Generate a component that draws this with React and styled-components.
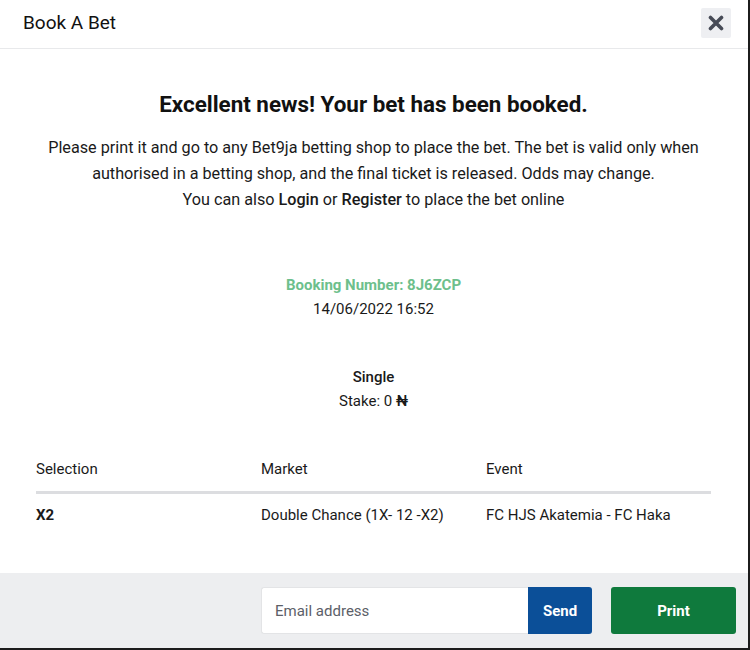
import React from 'react';
import styled, { createGlobalStyle } from 'styled-components';

const GlobalStyle = createGlobalStyle`
  html, body {
    margin: 0;
    padding: 0;
    background: #1c1c1c;
  }
  body {
    font-family: Roboto, "Liberation Sans", Arial, sans-serif;
    color: #1a1a1a;
  }
`;

const Modal = styled.div`
  width: 748px;
  height: 648px;
  background: #fff;
  display: flex;
  flex-direction: column;
  box-sizing: border-box;
`;

const Header = styled.div`
  height: 49px;
  box-sizing: border-box;
  border-bottom: 1px solid #e8e9eb;
  display: flex;
  align-items: center;
  justify-content: space-between;
  padding: 0 17px 0 23px;
`;

const Title = styled.h2`
  margin: 0;
  font-size: 19px;
  font-weight: 400;
  color: #111;
  margin-top: -4px;
`;

const CloseButton = styled.button`
  width: 30px;
  height: 30px;
  border: none;
  border-radius: 2px;
  background: #eeeff2;
  display: flex;
  align-items: center;
  justify-content: center;
  padding: 0;
  margin-top: -3px;
  cursor: pointer;
`;

const Body = styled.div`
  flex: 1;
  padding: 41px 37px 0 36px;
  text-align: center;
`;

const Heading = styled.h1`
  margin: 0;
  font-size: 22.4px;
  line-height: 28px;
  font-weight: 700;
  color: #111;
`;

const Intro = styled.p`
  margin: 17px 0 0;
  font-size: 16.2px;
  line-height: 26px;
  color: #1a1a1a;
  b {
    font-weight: 500;
  }
`;

const InfoBlock = styled.div`
  margin-top: ${p => p.$gap}px;
  font-size: 15px;
  line-height: 24px;
  display: flex;
  flex-direction: column;
  align-items: center;
`;

const Booking = styled.div`
  color: #6dbf8c;
  font-weight: 700;
`;

const Strong = styled.div`
  font-weight: 500;
`;

const Naira = styled.span`
  font-weight: 500;
`;

const Table = styled.div`
  margin-top: 46px;
  text-align: left;
  font-size: 15px;
  line-height: 20px;
`;

const Row = styled.div`
  display: grid;
  grid-template-columns: 225px 225px 1fr;
  padding: ${p => (p.$head ? '0 0 12px' : '11px 0 0')};
  border-bottom: ${p => (p.$head ? '3px solid #dcdde0' : 'none')};
`;

const Cell = styled.div`
  font-weight: ${p => (p.$bold ? 700 : 400)};
  color: #1a1a1a;
`;

const Footer = styled.div`
  height: 75px;
  background: #edeef0;
  display: flex;
  align-items: center;
  justify-content: flex-end;
  padding: 0 12px 0 0;
  gap: 19px;
`;

const EmailGroup = styled.div`
  display: flex;
  height: 47px;
`;

const EmailInput = styled.input`
  width: 267px;
  height: 47px;
  box-sizing: border-box;
  border: 1px solid #e3e4e6;
  border-right: none;
  border-radius: 3px 0 0 3px;
  padding: 0 13px;
  font-family: inherit;
  font-size: 15px;
  color: #333;
  outline: none;
  &::placeholder {
    color: #5c6068;
  }
`;

const Button = styled.button`
  height: 47px;
  width: ${p => p.$width}px;
  border: none;
  border-radius: 3px;
  background: ${p => p.$bg};
  color: #fff;
  font-family: inherit;
  font-size: 15px;
  font-weight: 700;
  cursor: pointer;
`;

const SendButton = styled(Button)`
  border-radius: 0 3px 3px 0;
`;

export default function App() {
  return (
    <>
      <GlobalStyle />
      <Modal>
        <Header>
          <Title>Book A Bet</Title>
          <CloseButton aria-label="close">
            <svg width="16" height="16" viewBox="0 0 16 16">
              <path d="M2.5 2.5 L13.5 13.5 M13.5 2.5 L2.5 13.5" stroke="#474b57" strokeWidth="3.6" strokeLinecap="round" />
            </svg>
          </CloseButton>
        </Header>
        <Body>
          <Heading>Excellent news! Your bet has been booked.</Heading>
          <Intro>
            Please print it and go to any Bet9ja betting shop to place the bet. The bet is valid only when
            authorised in a betting shop, and the final ticket is released. Odds may change.
            <br />
            You can also <b>Login</b> or <b>Register</b> to place the bet online
          </Intro>
          <InfoBlock $gap={60}>
            <Booking>Booking Number: 8J6ZCP</Booking>
            <div>14/06/2022 16:52</div>
          </InfoBlock>
          <InfoBlock $gap={44}>
            <Strong>Single</Strong>
            <div>Stake: 0 <Naira>₦</Naira></div>
          </InfoBlock>
          <Table>
            <Row $head>
              <Cell>Selection</Cell>
              <Cell>Market</Cell>
              <Cell>Event</Cell>
            </Row>
            <Row>
              <Cell $bold>X2</Cell>
              <Cell>Double Chance (1X- 12 -X2)</Cell>
              <Cell>FC HJS Akatemia - FC Haka</Cell>
            </Row>
          </Table>
        </Body>
        <Footer>
          <EmailGroup>
            <EmailInput placeholder="Email address" />
            <SendButton $bg="#0b4f98" $width={64}>Send</SendButton>
          </EmailGroup>
          <Button $bg="#0f7a3d" $width={125}>Print</Button>
        </Footer>
      </Modal>
    </>
  );
}
